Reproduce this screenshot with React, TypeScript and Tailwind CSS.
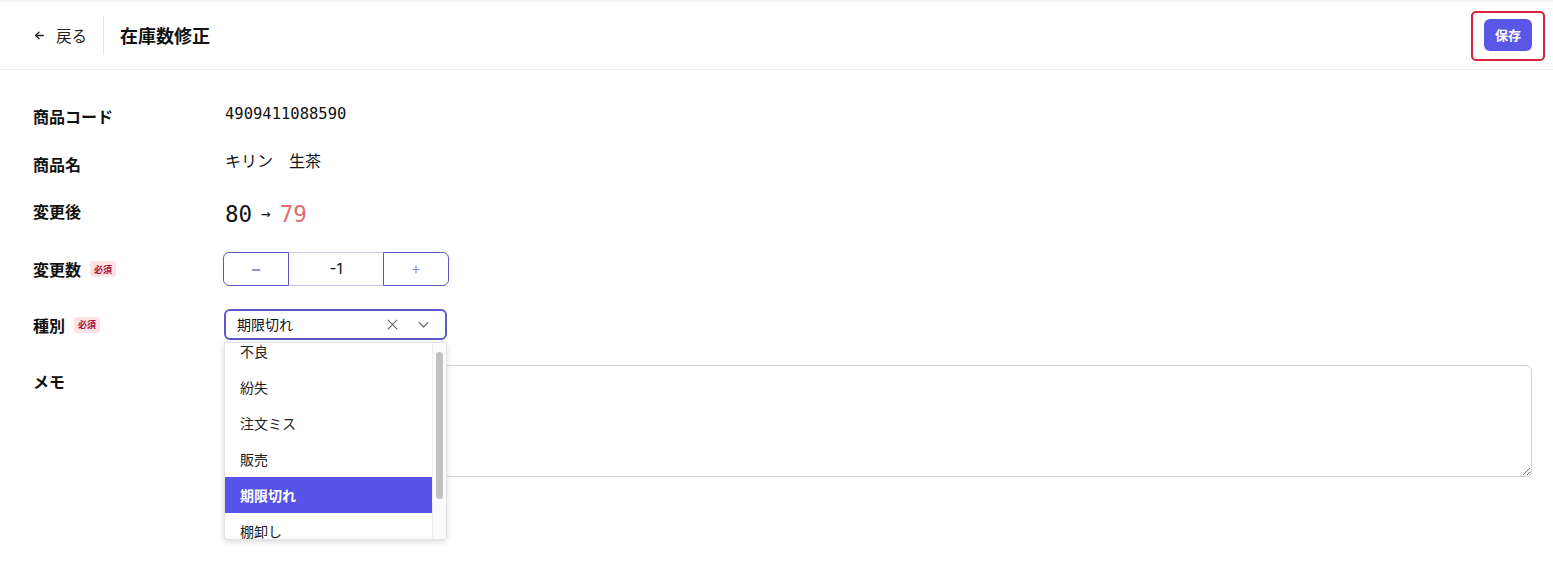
import React from 'react';

const JP = '"Noto Sans CJK JP", "Noto Sans", sans-serif';
const MONO = '"DejaVu Sans Mono", "Liberation Mono", "Noto Sans CJK JP", monospace';

const OPTIONS = ['不良', '紛失', '注文ミス', '販売', '期限切れ', '棚卸し'];

function Required() {
  return (
    <span className="ml-[9px] inline-flex h-[16px] items-center rounded-[3px] bg-[#fde1e4] px-[4px] text-[9px] font-bold leading-none text-[#a3123a]">
      必須
    </span>
  );
}

export default function App() {
  const [qty, setQty] = React.useState(-1);
  const before = 80;

  return (
    <div className="min-h-[586px] w-full bg-white text-[#111]" style={{ fontFamily: JP }}>
      {/* ヘッダー */}
      <header className="flex h-[70px] items-center justify-between border-t-2 border-b border-t-[#f3f3f3] border-b-[#efefef]">
        <div className="flex items-center">
          <button type="button" className="ml-[33px] flex items-center gap-[10px] text-[15.5px] text-[#222]">
            <svg width="13" height="13" viewBox="0 0 24 24" fill="none" stroke="currentColor" strokeWidth="2.4" strokeLinecap="round" strokeLinejoin="round">
              <path d="M19 12H5" />
              <path d="M11 6l-6 6 6 6" />
            </svg>
            戻る
          </button>
          <div className="ml-[16px] h-[39px] w-px bg-[#e6e6e6]" />
          <h1 className="ml-[16px] text-[18px] font-bold">在庫数修正</h1>
        </div>
        <div className="mr-[8px] rounded-[5px] border-2 border-[#d8213b] px-[11px] pt-[6px] pb-[8px]">
          <button type="button" className="h-[32px] w-[48px] rounded-md bg-[#5b57e6] text-[13px] font-bold text-white">
            保存
          </button>
        </div>
      </header>

      {/* フォーム */}
      <div className="pl-[33px] pr-[21px]">
        <div className="mt-[32px] flex items-start">
          <div className="w-[192px] text-[16px] font-bold leading-[28px]">商品コード</div>
          <div className="pt-[2px] text-[15.5px] leading-[20px]" style={{ fontFamily: MONO }}>4909411088590</div>
        </div>

        <div className="mt-[20px] flex items-start">
          <div className="w-[192px] text-[16px] font-bold leading-[28px]">商品名</div>
          <div className="text-[16px] leading-[20px]">キリン　生茶</div>
        </div>

        <div className="mt-[19px] flex items-start">
          <div className="w-[192px] text-[16px] font-bold leading-[28px]">変更後</div>
          <div className="flex items-center pt-[2px] text-[22.5px] leading-[30px]" style={{ fontFamily: MONO }}>
            <span>{before}</span>
            <span className="mx-[9px] text-[16px]">→</span>
            <span className="text-[#e06b76]">{before + qty}</span>
          </div>
        </div>

        <div className="mt-[23px] flex items-center">
          <div className="flex w-[190px] items-center text-[16px] font-bold">
            変更数<Required />
          </div>
          <div className="flex h-[34px]">
            <button
              type="button"
              onClick={() => setQty(qty - 1)}
              className="w-[66px] rounded-l-md border border-[#5c58c4] text-[16px] font-bold text-[#8a86dc]"
            >
              −
            </button>
            <div className="flex w-[94px] items-center justify-center border-y border-[#c9c7ee] text-[15px]" style={{ fontFamily: '"Inter", sans-serif' }}>
              {qty}
            </div>
            <button
              type="button"
              onClick={() => setQty(qty + 1)}
              className="w-[66px] rounded-r-md border border-[#5c58c4] text-[15px] text-[#8a86dc]"
            >
              +
            </button>
          </div>
        </div>

        <div className="relative z-10 mt-[23px] flex items-center">
          <div className="flex w-[191px] items-center text-[16px] font-bold">
            種別<Required />
          </div>
          <div className="relative">
            <div className="flex h-[31px] w-[223px] items-center rounded-md border-2 border-[#5c58c9] pl-[11px] pr-[14px] text-[14px]">
              <span className="flex-1">期限切れ</span>
              <svg className="mr-[16px]" width="15" height="15" viewBox="0 0 24 24" fill="none" stroke="#666" strokeWidth="1.8" strokeLinecap="round">
                <path d="M5 5l14 14M19 5L5 19" />
              </svg>
              <svg width="15" height="15" viewBox="0 0 24 24" fill="none" stroke="#666" strokeWidth="2" strokeLinecap="round" strokeLinejoin="round">
                <path d="M5 9l7 7 7-7" />
              </svg>
            </div>

            {/* ドロップダウン */}
            <div className="absolute left-0 top-[33px] flex h-[198px] w-[223px] overflow-hidden rounded-b-[4px] border border-[#e2e2e2] bg-white shadow-[0_2px_6px_rgba(0,0,0,0.15)]">
              <ul className="-mt-[10px] flex-1">
                {OPTIONS.map((o) => (
                  <li
                    key={o}
                    className={`flex h-[36px] items-center pl-[15px] text-[14px] ${
                      o === '期限切れ' ? 'bg-[#5653e8] font-bold text-white' : 'text-[#222]'
                    }`}
                  >
                    {o}
                  </li>
                ))}
              </ul>
              <div className="w-[14px] border-l border-[#f0f0f0] bg-[#fafafa] pt-[9px]">
                <div className="mx-auto h-[147px] w-[7px] rounded-full bg-[#c1c1c1]" />
              </div>
            </div>
          </div>
        </div>

        <div className="mt-[25px] flex items-start">
          <div className="w-[191px] text-[16px] font-bold leading-[32px]">メモ</div>
          <textarea className="h-[112px] flex-1 rounded-md border border-[#cfcfd4] p-2 text-[14px] outline-none" />
        </div>
      </div>
    </div>
  );
}
